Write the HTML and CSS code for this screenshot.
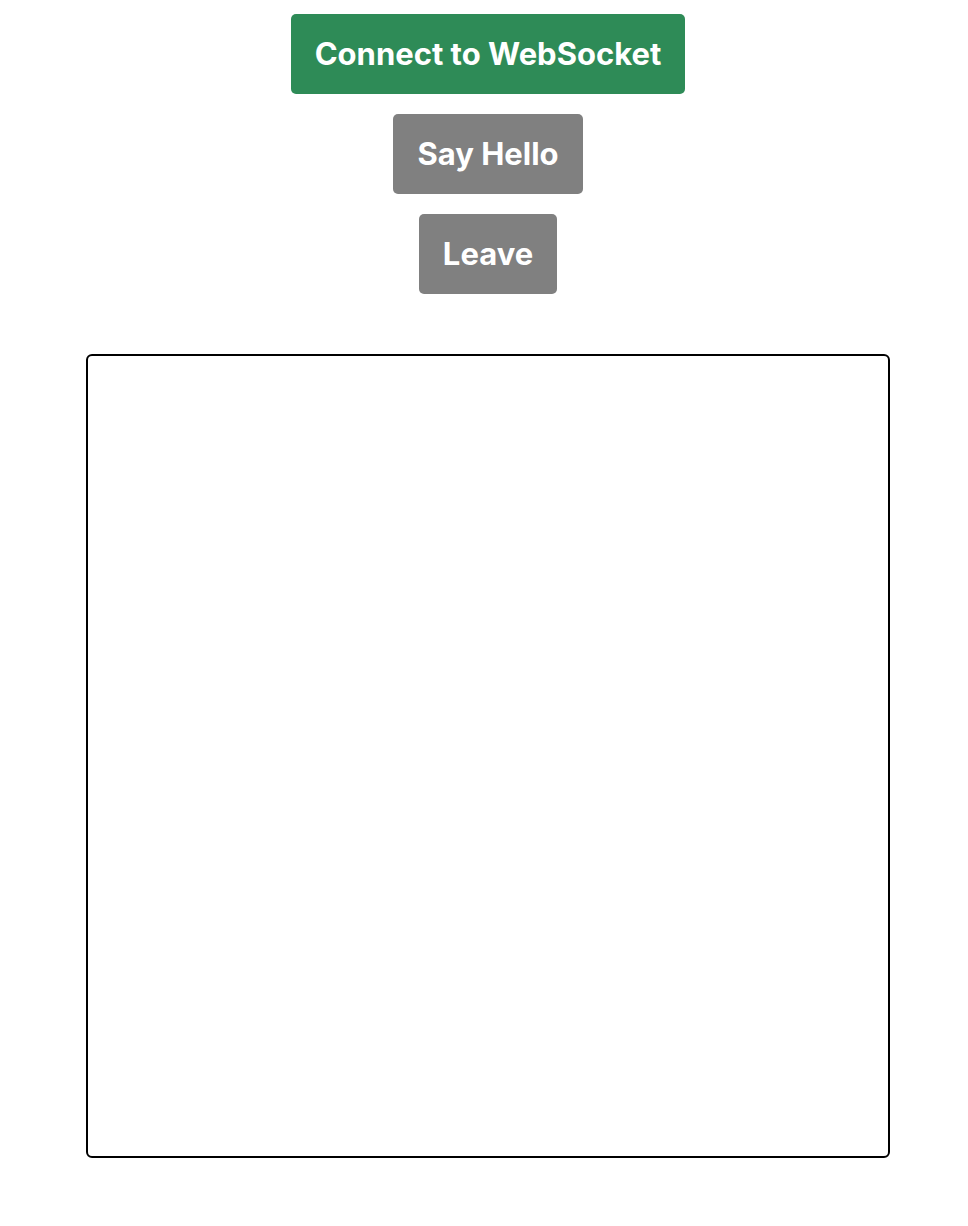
FILE: index.html
```html
<!DOCTYPE html>
<html lang="en">
<head>
  <meta charset="UTF-8" />
  <meta name="viewport" content="width=device-width, initial-scale=1.0"/>
  <title>WebSocket Demo</title>
  <link rel="stylesheet" href="styles.css">
</head>
<body>
  <div class="controls">
    <button class="btn connect">Connect to WebSocket</button>
    <button class="btn action">Say Hello</button>
    <button class="btn action">Leave</button>
  </div>

  <div class="messages" id="messages"></div>
</body>
</html>
```

FILE: styles.css
```css
body {
  margin: 14px 0 0 8px;
  font-family: Inter, "Liberation Sans", sans-serif;
  background-color: white;
}
.controls {
  display: flex;
  flex-direction: column;
  align-items: center;
  gap: 20px;
}
.btn {
  font-family: Inter, "Liberation Sans", sans-serif;
  font-weight: bold;
  font-size: 31px;
  line-height: 32px;
  color: white;
  padding: 24px 24px;
  border: none;
  border-radius: 5px;
  cursor: pointer;
}
.connect {
  background-color: #2e8b57;
}
.action {
  background-color: #808080;
}
.messages {
  width: 800px;
  height: 800px;
  margin: 60px auto 0;
  border: 2px solid black;
  border-radius: 6px;
}
```
